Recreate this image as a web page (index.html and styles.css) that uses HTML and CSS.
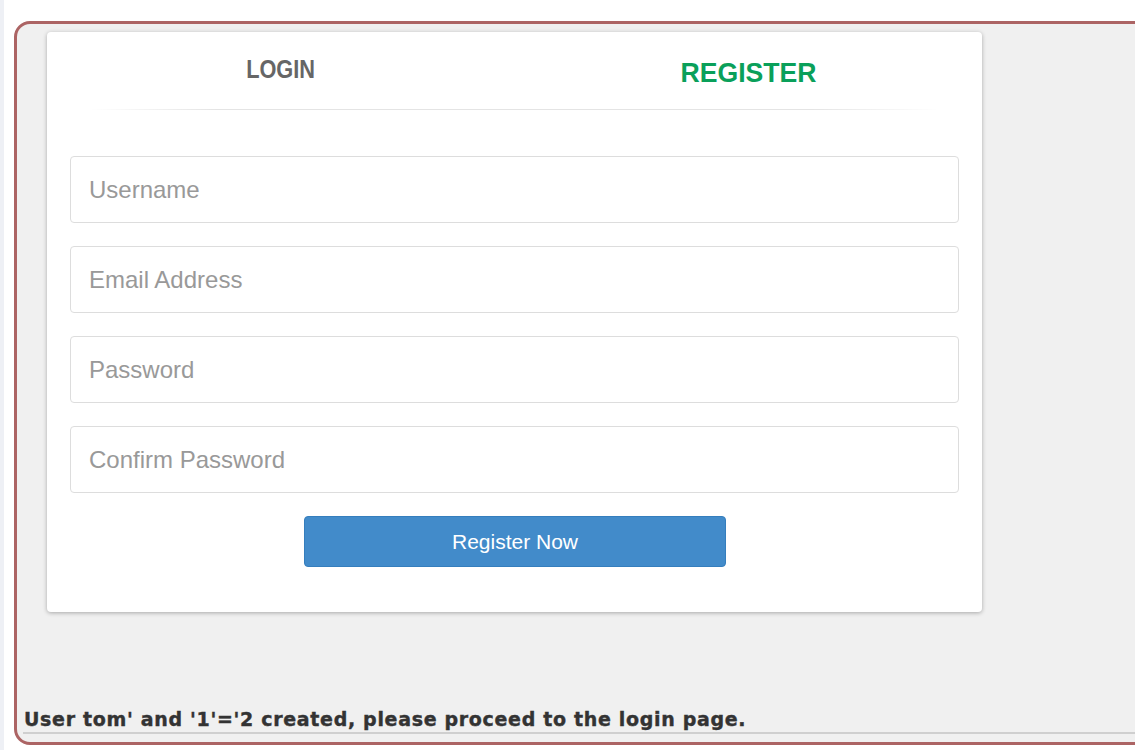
FILE: index.html
```html
<!DOCTYPE html>
<html>
<head>
<meta charset="utf-8">
<link rel="stylesheet" href="styles.css">
</head>
<body>
<div class="page">
  <div class="frame">
    <div class="card">
      <div class="tabs">
        <div class="tab tab-login"><span class="tab-text">LOGIN</span></div>
        <div class="tab tab-register"><span class="tab-text">REGISTER</span></div>
      </div>
      <div class="divider"></div>
      <form class="form">
        <input class="field" type="text" placeholder="Username">
        <input class="field" type="text" placeholder="Email Address">
        <input class="field" type="password" placeholder="Password">
        <input class="field" type="password" placeholder="Confirm Password">
        <div class="actions"><button class="btn" type="button">Register Now</button></div>
      </form>
    </div>
    <div class="message">User tom' and '1'='2 created, please proceed to the login page.</div>
    <div class="rule"></div>
  </div>
</div>
</body>
</html>
```
FILE: styles.css
```css
html, body {
  margin: 0;
  padding: 0;
  background: #ffffff;
  height: 100%;
  overflow: hidden;
}
body {
  font-family: "Liberation Sans", Arial, sans-serif;
}
.page {
  border-left: 4px solid #eef0f5;
  padding: 21px 0 0 10px;
  height: 750px;
  box-sizing: border-box;
}
.frame {
  width: 1140px;
  height: 724px;
  box-sizing: border-box;
  border: 3px solid #ac6464;
  border-radius: 16px;
  background: #f0f0f0;
  padding: 8px 0 0 30px;
  display: flex;
  flex-direction: column;
}
.card {
  width: 935px;
  height: 580px;
  box-sizing: border-box;
  background: #fff;
  border-radius: 4px;
  box-shadow: 0 1px 4px rgba(0,0,0,0.3);
  padding: 0 23px;
}
.tabs {
  display: flex;
  height: 77px;
  margin: 0 -23px;
}
.tab {
  flex: 1;
  text-align: center;
  font-weight: bold;
}
.tab-text {
  display: inline-block;
}
.tab-login {
  color: #666;
  font-size: 25px;
  padding-top: 23px;
}
.tab-login .tab-text {
  transform: scaleX(0.87);
}
.tab-register {
  color: #0aa05a;
  font-size: 28px;
  padding-top: 25px;
}
.tab-register .tab-text {
  transform: scaleX(0.95);
}
.divider {
  height: 1px;
  margin: 0 20px;
  background: linear-gradient(to right, rgba(220,220,220,0), #e4e4e4 15%, #e4e4e4 85%, rgba(220,220,220,0));
}
.form {
  display: flex;
  flex-direction: column;
  gap: 23px;
  padding-top: 46px;
}
.field {
  height: 67px;
  box-sizing: border-box;
  border: 1px solid #dddddd;
  border-radius: 4px;
  padding: 0 18px;
  font-family: "Liberation Sans", Arial, sans-serif;
  font-size: 24px;
  color: #555;
  outline: none;
  margin: 0;
}
.field::placeholder {
  color: #999;
}
.actions {
  display: flex;
  justify-content: center;
}
.btn {
  width: 422px;
  height: 51px;
  background: #428bca;
  border: 1px solid #357ebd;
  border-radius: 4px;
  color: #fff;
  font-family: "Liberation Sans", Arial, sans-serif;
  font-size: 21px;
  margin-left: 1px;
}
.message {
  margin-top: auto;
  margin-left: -24px;
  padding-left: 1px;
  font-family: "DejaVu Sans", sans-serif;
  font-weight: bold;
  font-size: 19px;
  letter-spacing: 0.68px;
  -webkit-text-stroke: 0.4px #333;
  color: #333;
  line-height: 22px;
}
.rule {
  margin: 2px 0 8px -24px;
  height: 2px;
  background: #cfcfcf;
}
```
